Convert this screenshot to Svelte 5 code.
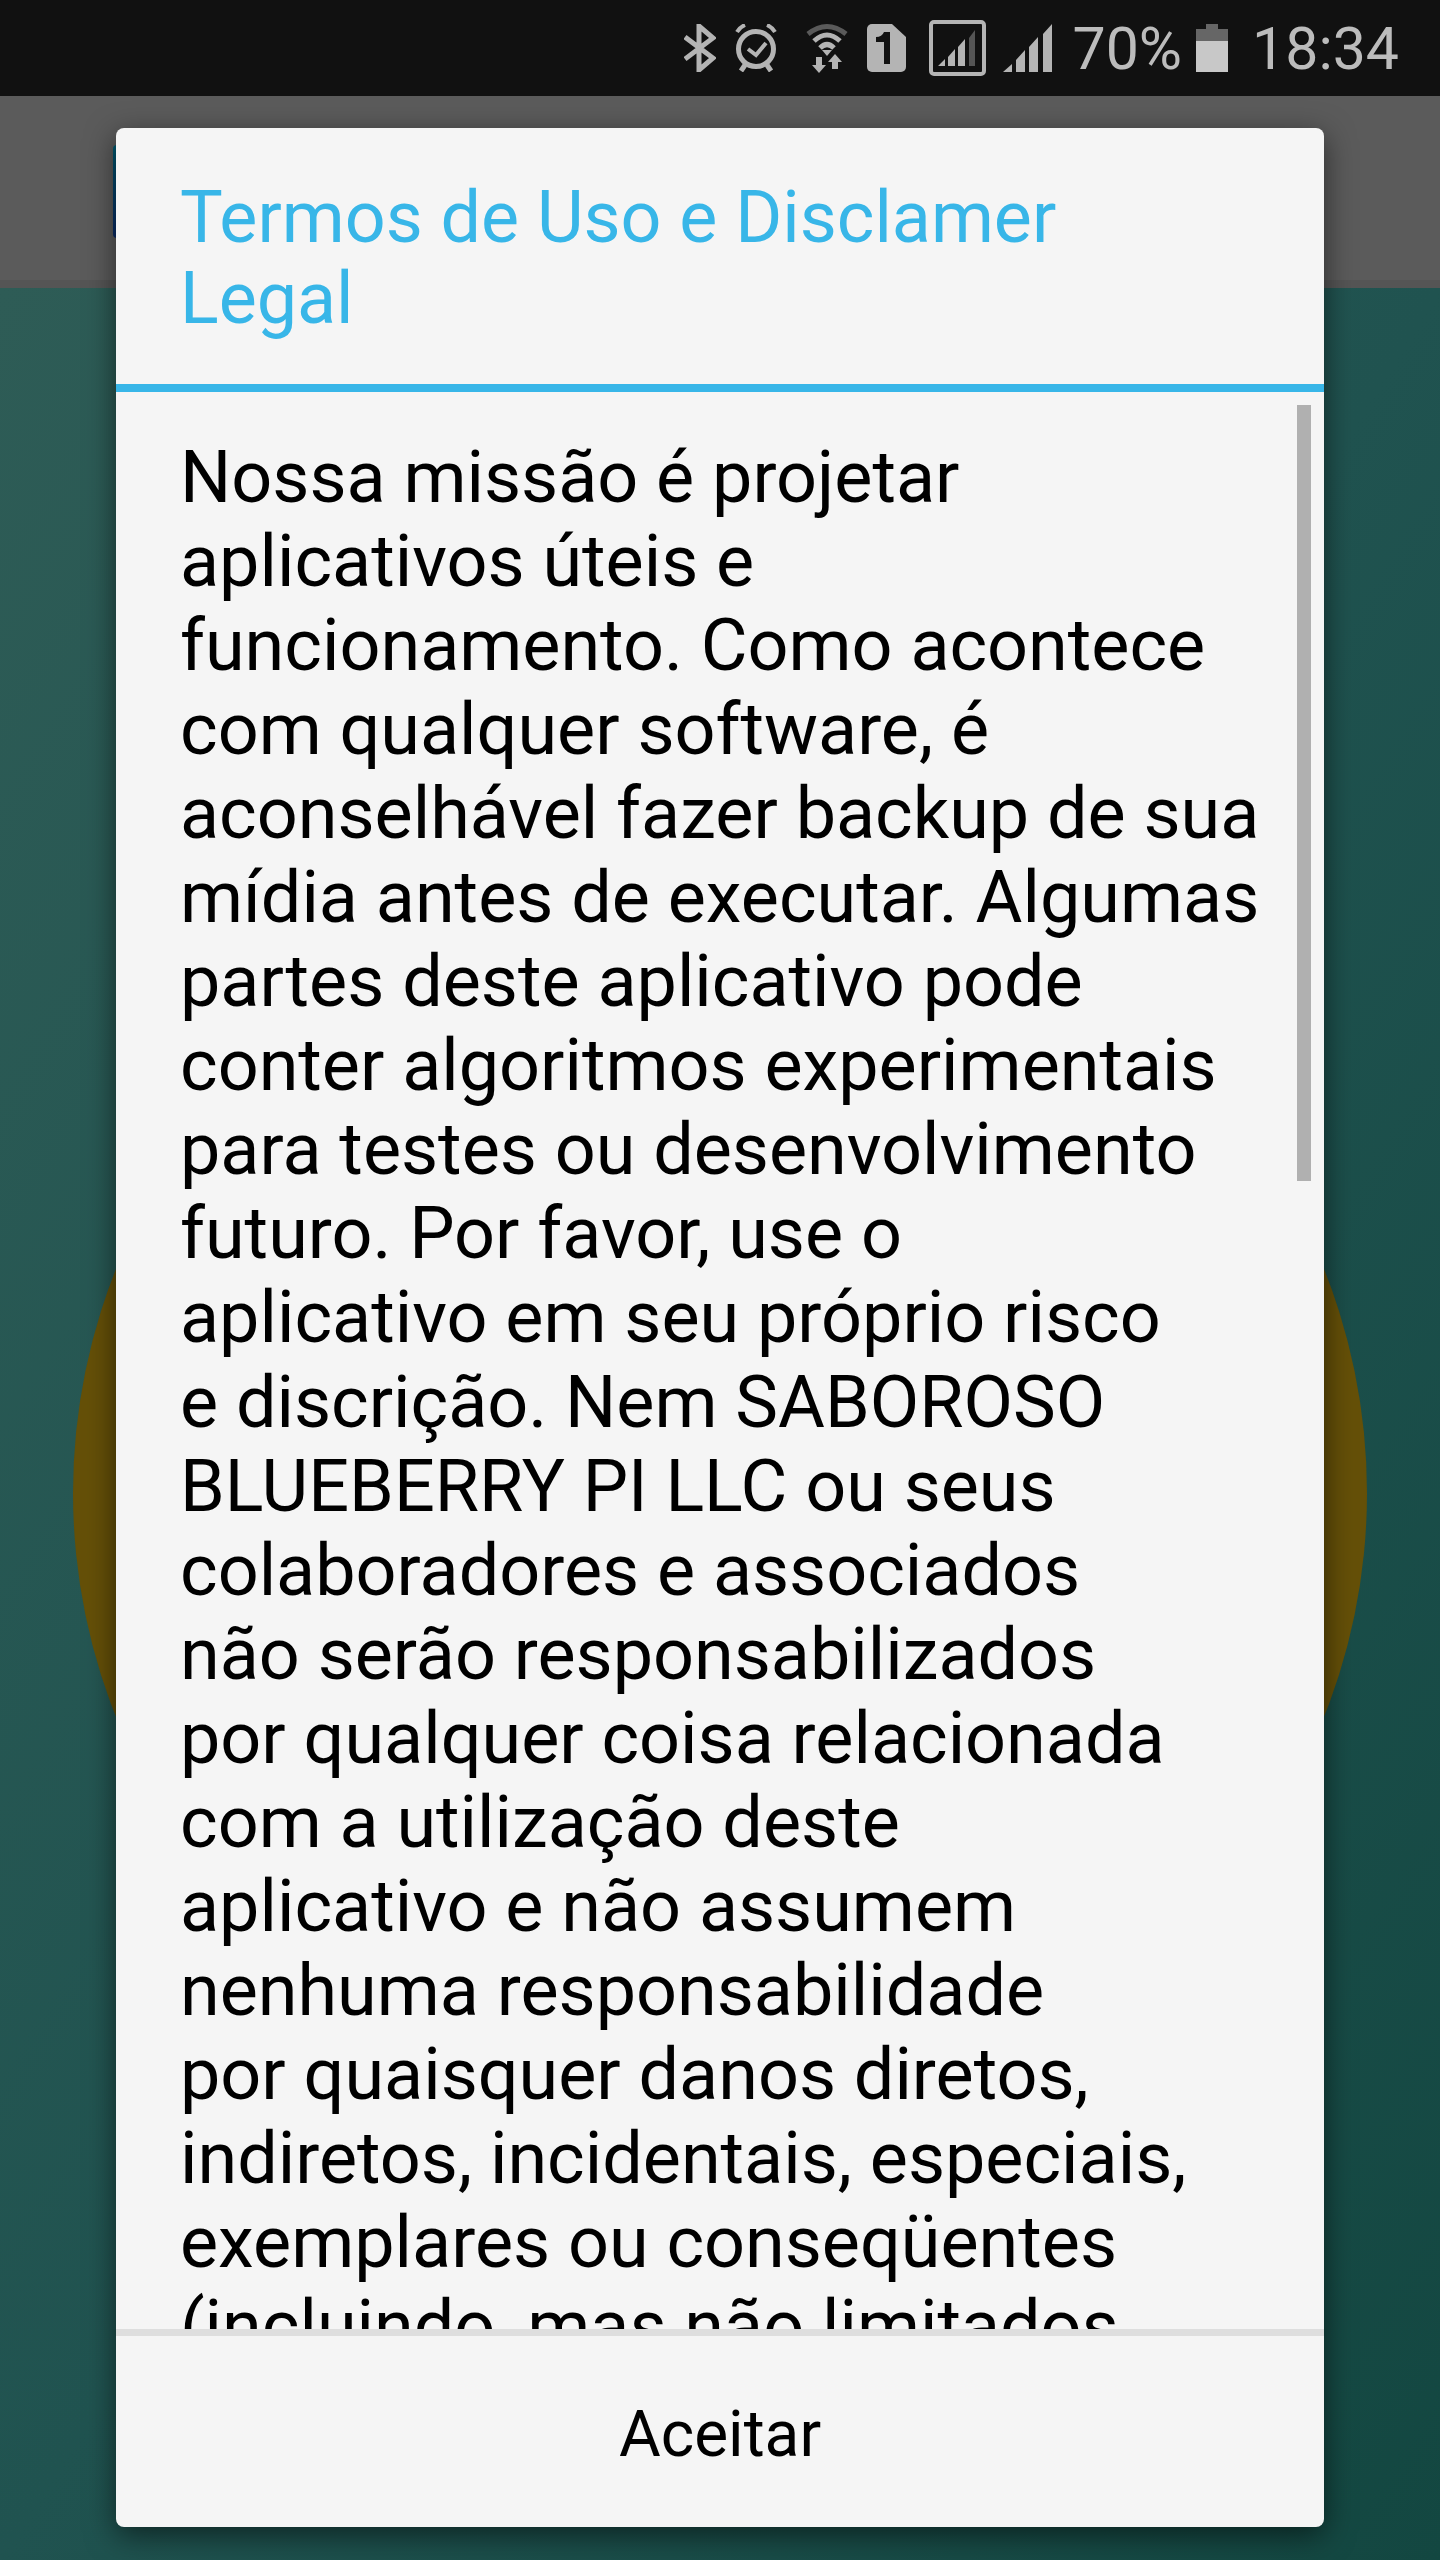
<script>
	const bodyLines = [
		'Nossa missão é projetar',
		'aplicativos úteis e',
		'funcionamento. Como acontece',
		'com qualquer software, é',
		'aconselhável fazer backup de sua',
		'mídia antes de executar. Algumas',
		'partes deste aplicativo pode',
		'conter algoritmos experimentais',
		'para testes ou desenvolvimento',
		'futuro. Por favor, use o',
		'aplicativo em seu próprio risco',
		'e discrição. Nem SABOROSO',
		'BLUEBERRY PI LLC ou seus',
		'colaboradores e associados',
		'não serão responsabilizados',
		'por qualquer coisa relacionada',
		'com a utilização deste',
		'aplicativo e não assumem',
		'nenhuma responsabilidade',
		'por quaisquer danos diretos,',
		'indiretos, incidentais, especiais,',
		'exemplares ou conseqüentes',
		'(incluindo, mas não limitados'
	];
</script>

<div class="screen">
	<header class="status">
		<svg class="ic" width="32" height="48" viewBox="0 0 32 48"><path d="M1 13l28 21-14 12V2l14 12L1 35" fill="none" stroke="#b4b4b4" stroke-width="5" /></svg>
		<svg class="ic alarm" width="42" height="48" viewBox="0 0 42 48">
			<circle cx="21" cy="25" r="17.5" fill="none" stroke="#b4b4b4" stroke-width="5" />
			<path d="M2 8q3-5 8-7M40 8q-3-5-8-7" fill="none" stroke="#b4b4b4" stroke-width="4" />
			<path d="M10 41l-4 6M32 41l4 6" fill="none" stroke="#b4b4b4" stroke-width="5" />
			<path d="M13 25l8 6 10-12" fill="none" stroke="#b4b4b4" stroke-width="4" />
		</svg>
		<svg class="ic wifi" width="42" height="50" viewBox="0 0 42 50">
			<path d="M2 11Q21-4 40 11" fill="none" stroke="#5a5a5a" stroke-width="5" />
			<path d="M8 18Q21 6 34 18M14 25Q21 18 28 25" fill="none" stroke="#b4b4b4" stroke-width="5" />
			<path d="M16 27h10l-5 6z" fill="#b4b4b4" />
			<path d="M10 34v8H6l7 8 7-8h-4v-8zM26 46v-7h-4l7-8 7 8h-4v7z" fill="#b4b4b4" />
		</svg>
		<svg class="ic sim" width="39" height="48" viewBox="0 0 39 48">
			<path d="M5 0h20l14 13v30a5 5 0 0 1-5 5H5a5 5 0 0 1-5-5V5a5 5 0 0 1 5-5z" fill="#b4b4b4" />
			<path d="M17 8h6v32h-6V18H9v-5q6 0 8-5z" fill="#111" />
		</svg>
		<div class="box">
			<svg width="38" height="36" viewBox="0 0 38 36">
				<path d="M0 36l7-7v7zM10 36V27l7-8v17zM20 36V17l7-8v27z" fill="#b4b4b4" />
				<path d="M31 36V8l6-8v36z" fill="#555" />
			</svg>
		</div>
		<svg class="ic signal" width="49" height="48" viewBox="0 0 49 48">
			<path d="M0 48l9-8v8zM13 48V36l9-10v22zM26 48V23l9-10v35zM40 48V10l9-10v48z" fill="#b4b4b4" />
		</svg>
		<span class="pct">70%</span>
		<div class="battery"><span class="nub"></span><span class="empty"></span><span class="full"></span></div>
		<span class="clock">18:34</span>
	</header>
	<div class="appbar"></div>
	<main class="content"></main>
	<div class="circle"></div>
	<div class="peek"></div>

	<section class="dialog">
		<h1>Termos de Uso e Disclamer<br />Legal</h1>
		<div class="rule"></div>
		<div class="scroll">
			<div class="thumb"></div>
			{#each bodyLines as line}
				<p>{line}</p>
			{/each}
		</div>
		<footer>Aceitar</footer>
	</section>
</div>

<style>
	:global(body) {
		background: #154a44;
	}
	.screen {
		position: relative;
		width: 1440px;
		height: 2560px;
		overflow: hidden;
		display: flex;
		flex-direction: column;
		font-family: Roboto, "Noto Sans", sans-serif;
	}
	.status {
		height: 96px;
		flex: none;
		background: #111;
		display: flex;
		align-items: center;
		justify-content: flex-end;
		padding-right: 41px;
		color: #bcbcbc;
	}
	.ic {
		flex: none;
	}
	.alarm {
		margin-left: 19px;
	}
	.wifi {
		margin-left: 29px;
	}
	.sim {
		margin-left: 19px;
	}
	.box {
		margin-left: 23px;
		width: 57px;
		height: 56px;
		box-sizing: border-box;
		border: 4px solid #b4b4b4;
		border-radius: 5px;
		display: flex;
		align-items: flex-end;
		justify-content: center;
		padding-bottom: 6px;
	}
	.signal {
		margin-left: 17px;
	}
	.pct {
		margin-left: 21px;
		font-size: 59px;
		font-weight: 400;
		line-height: 1;
	}
	.battery {
		margin-left: 14px;
		width: 32px;
		height: 48px;
		display: flex;
		flex-direction: column;
		align-items: center;
	}
	.nub {
		width: 12px;
		height: 5px;
		background: #666;
	}
	.empty {
		width: 100%;
		height: 12px;
		background: #666;
	}
	.full {
		width: 100%;
		flex: 1;
		background: #c8c8c8;
	}
	.clock {
		margin-left: 24px;
		font-size: 59px;
		font-weight: 400;
		line-height: 1;
	}
	.appbar {
		height: 184px;
		flex: none;
		background: #5b5b5b;
		border-bottom: 8px solid #555;
	}
	.content {
		flex: 1;
		background: linear-gradient(to bottom right, #2e5c56 0%, #205350 50%, #134741 100%);
	}
	.circle {
		position: absolute;
		left: 73px;
		top: 868px;
		width: 1294px;
		height: 1250px;
		border-radius: 50%;
		background: #655008;
	}
	.peek {
		position: absolute;
		left: 113px;
		top: 145px;
		width: 10px;
		height: 93px;
		border-radius: 4px;
		background: linear-gradient(#005a70, #0a2a66);
	}
	.dialog {
		position: absolute;
		left: 116px;
		top: 128px;
		width: 1208px;
		height: 2399px;
		background: #f5f5f5;
		border-radius: 8px;
		box-shadow: 0 8px 30px rgba(0, 0, 0, 0.55);
		display: flex;
		flex-direction: column;
		overflow: hidden;
	}
	h1 {
		margin: 0;
		height: 256px;
		flex: none;
		box-sizing: border-box;
		padding: 49px 64px 0;
		font-size: 71.8px;
		font-weight: 400;
		line-height: 81px;
		color: #38b6e8;
	}
	.rule {
		height: 8px;
		flex: none;
		background: #38b6e8;
	}
	.scroll {
		position: relative;
		flex: 1;
		min-height: 0;
		overflow: hidden;
		padding: 44px 0 0 64px;
		color: #000;
		font-size: 71.9px;
		line-height: 84.05px;
	}
	p {
		margin: 0;
		white-space: nowrap;
	}
	.thumb {
		position: absolute;
		right: 13px;
		top: 13px;
		width: 14px;
		height: 776px;
		background: #b0b0b0;
	}
	footer {
		flex: none;
		height: 198px;
		box-sizing: border-box;
		border-top: 7px solid #dedede;
		padding-top: 5px;
		display: flex;
		align-items: center;
		justify-content: center;
		font-size: 64px;
		color: #000;
	}
</style>
